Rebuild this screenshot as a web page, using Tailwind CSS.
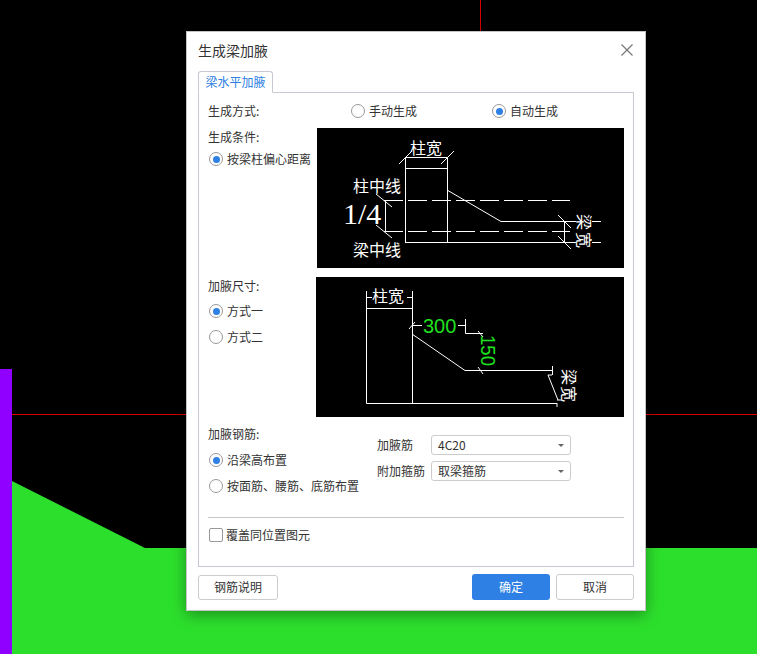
<!DOCTYPE html>
<html lang="zh-CN">
<head>
<meta charset="utf-8">
<title>生成梁加腋</title>
<script src="https://cdn.jsdelivr.net/npm/@tailwindcss/browser@4"></script>
</head>
<body class="bg-black">
<div class="relative w-[757px] h-[654px] overflow-hidden bg-black font-['Noto_Sans_CJK_SC','Noto_Sans',sans-serif] text-xs text-[#333]">
  <svg class="absolute inset-0" width="757" height="654" viewBox="0 0 757 654">
    <polygon points="12,481 145,548 757,548 757,654 12,654" fill="#2ddf2d"/>
    <rect x="0" y="369" width="12" height="285" fill="#8f00ff"/>
    <path d="M12 414.5H757M480.5 0V414" stroke="#d80000" stroke-width="1" fill="none"/>
  </svg>

  <div class="absolute left-[186px] top-[31px] w-[460px] h-[580px] bg-white border border-[#c4c4c4] shadow-[0_4px_14px_rgba(0,0,0,0.35)] flex flex-col">
    <div class="h-[39px] shrink-0 flex items-center justify-between pl-[11px] pr-[11px] pb-[4px] text-sm">
      <span>生成梁加腋</span>
      <svg width="14" height="14" viewBox="0 0 14 14" fill="none" stroke="#777" stroke-width="1.2"><path d="M1.5 1.5L12.5 12.5M12.5 1.5L1.5 12.5"/></svg>
    </div>

    <div class="ml-[11px] w-[436px] flex flex-col">
      <div class="relative z-10 -mb-px w-[75px] h-[22px] flex items-center justify-center bg-white border border-[#c8c8d0] border-b-white rounded-t-[3px] text-[#2e80e4]">梁水平加腋</div>
      <div class="h-[475px] border border-[#c8c8d0] pl-[9px] pr-[9px] flex flex-col">
        <div class="h-[20px] mt-[8px] flex items-center">
          <span class="w-[143px]">生成方式:</span>
          <span class="w-[141px] flex items-center gap-[4px]"><span class="w-[14px] h-[14px] rounded-full border border-[#999] bg-white"></span>手动生成</span>
          <span class="flex items-center gap-[4px]"><span class="w-[14px] h-[14px] rounded-full border border-[#999] bg-white flex items-center justify-center"><span class="w-[7px] h-[7px] rounded-full bg-[#2e80e4]"></span></span>自动生成</span>
        </div>

        <div class="mt-[7px] flex">
          <div class="w-[109px] shrink-0 flex flex-col">
            <span class="mt-[1px] h-[16px] leading-[16px]">生成条件:</span>
            <span class="mt-[4px] h-[20px] flex items-center gap-[4px] whitespace-nowrap"><span class="ml-px w-[14px] h-[14px] rounded-full border border-[#999] flex items-center justify-center"><span class="w-[7px] h-[7px] rounded-full bg-[#2e80e4]"></span></span>按梁柱偏心距离</span>
          </div>
          <svg class="block bg-black" width="307" height="140" viewBox="317 128 307 140" fill="none" stroke="#fff" stroke-width="1">
            <path d="M405.5 157V243M447.5 157V243M405.5 168.5H447.5M405.5 157.5H447.5M405.5 242.5H566M447 190L501 221.5H564"/>
            <path d="M399 164L412 151M441 164L454 151"/>
            <path d="M384 200.5H570M384 231.5H570" stroke-dasharray="19 5"/>
            <path d="M385.5 200V232M376 194L392 207M376 225L392 238"/>
            <path d="M564.5 221V243M558 215L571 228M558 236L571 249M565 221.5H576M565 242.5H576M592 221.5H601M592 242.5H601"/>
            <g stroke="none" fill="#fff" font-family="'Noto Sans CJK SC',sans-serif" font-size="16">
              <text x="410" y="154">柱宽</text>
              <text x="353" y="192">柱中线</text>
              <text x="353" y="256">梁中线</text>
              <text transform="translate(578 214) rotate(90)" font-size="16" letter-spacing="2">梁宽</text>
            </g>
            <text x="343" y="224" stroke="none" fill="#fff" font-family="'Liberation Serif',serif" font-size="30">1/4</text>
          </svg>
        </div>

        <div class="mt-[9px] flex">
          <div class="w-[108px] shrink-0 flex flex-col">
            <span class="mt-[1px] h-[16px] leading-[16px]">加腋尺寸:</span>
            <span class="mt-[7px] h-[20px] flex items-center gap-[4px]"><span class="ml-px w-[14px] h-[14px] rounded-full border border-[#999] flex items-center justify-center"><span class="w-[7px] h-[7px] rounded-full bg-[#2e80e4]"></span></span>方式一</span>
            <span class="mt-[6px] h-[20px] flex items-center gap-[4px]"><span class="ml-px w-[14px] h-[14px] rounded-full border border-[#999]"></span>方式二</span>
          </div>
          <svg class="block bg-black" width="308" height="140" viewBox="316 277 308 140" fill="none" stroke="#fff" stroke-width="1">
            <path d="M366.5 291V403.5H557M412.5 291V403.5M366.5 308.5H412.5M366.5 297.5H372M407 297.5H412.5"/>
            <path d="M412 334L465 370.5H552.5M552.5 366V375M548 375L558 400M552 375H548M557 403V407M557 400H561"/>
            <path d="M412 325.5H422M458 325.5H465.5M465.5 319V333.5H483M409 329L415 322M478 331L483 337M478 367L483 374"/>
            <g stroke="none" font-family="'Noto Sans CJK SC',sans-serif">
              <text x="372" y="302" fill="#fff" font-size="16">柱宽</text>
              <text transform="translate(563 369) rotate(90)" fill="#fff" font-size="16" letter-spacing="1">梁宽</text>
            </g>
            <g stroke="none" fill="#1fe01f" font-family="'Liberation Sans',sans-serif" font-size="20">
              <text x="423" y="333">300</text>
              <text transform="translate(481 335) rotate(90)" textLength="31" lengthAdjust="spacingAndGlyphs">150</text>
            </g>
          </svg>
        </div>

        <div class="mt-[9px] flex">
          <div class="w-[169px] shrink-0 flex flex-col">
            <span class="h-[16px] leading-[16px]">加腋钢筋:</span>
            <span class="mt-[8px] h-[20px] flex items-center gap-[4px]"><span class="ml-px w-[14px] h-[14px] rounded-full border border-[#999] flex items-center justify-center"><span class="w-[7px] h-[7px] rounded-full bg-[#2e80e4]"></span></span>沿梁高布置</span>
            <span class="mt-[6px] h-[20px] flex items-center gap-[4px] whitespace-nowrap"><span class="ml-px w-[14px] h-[14px] rounded-full border border-[#999]"></span>按面筋、腰筋、底筋布置</span>
          </div>
          <div class="mt-[9px] flex flex-col gap-[6px]">
            <div class="flex items-center">
              <span class="w-[54px]">加腋筋</span>
              <div class="w-[140px] h-[20px] border border-[#ccc] rounded-[3px] pl-[6px] pr-[6px] flex items-center justify-between"><span>4C20</span><span class="w-0 h-0 border-x-[3px] border-x-transparent border-t-[3px] border-t-[#666]"></span></div>
            </div>
            <div class="flex items-center">
              <span class="w-[54px]">附加箍筋</span>
              <div class="w-[140px] h-[20px] border border-[#ccc] rounded-[3px] pl-[6px] pr-[6px] flex items-center justify-between"><span>取梁箍筋</span><span class="w-0 h-0 border-x-[3px] border-x-transparent border-t-[3px] border-t-[#666]"></span></div>
            </div>
          </div>
        </div>

        <div class="mt-[21px] border-t border-[#c8c8c8]"></div>
        <div class="mt-[7px] h-[20px] flex items-center gap-[3px]"><span class="ml-px w-[14px] h-[14px] rounded-[2px] border border-[#999] bg-white"></span>覆盖同位置图元</div>
      </div>
    </div>

    <div class="ml-[11px] w-[436px] mt-[7px] flex items-center">
      <button class="w-[80px] h-[25px] border border-[#ccc] rounded-[3px] bg-white text-xs">钢筋说明</button>
      <button class="ml-auto w-[78px] h-[26px] rounded-[3px] bg-[#2e80e4] text-white text-xs">确定</button>
      <button class="ml-[6px] w-[78px] h-[26px] border border-[#ccc] rounded-[3px] bg-white text-xs">取消</button>
    </div>
  </div>
</div>
</body>
</html>
